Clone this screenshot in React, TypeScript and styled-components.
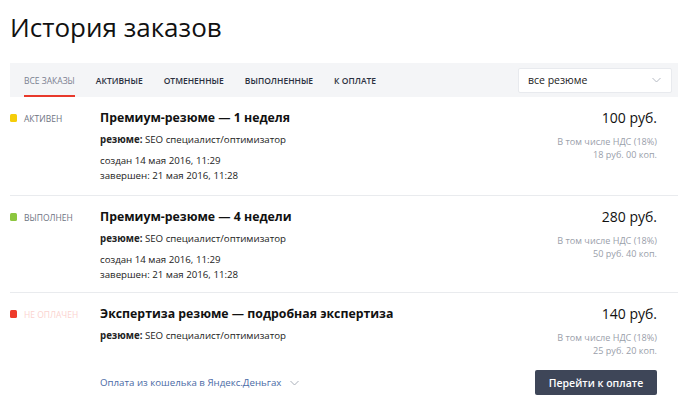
import React from "react";
import styled, { createGlobalStyle } from "styled-components";

const Global = createGlobalStyle`
  html, body { margin: 0; padding: 0; background: #fff; }
  body { font-family: "Open Sans", "Noto Sans", sans-serif; color: #1a1a1a; }
`;

const Page = styled.div`
  padding: 0 11px 0 10px;
`;

const Title = styled.h1`
  margin: 0;
  padding-top: 9px;
  height: 63px;
  box-sizing: border-box;
  font-size: 26px;
  line-height: 36px;
  font-weight: 400;
  color: #111;
`;

const TabBar = styled.div`
  display: flex;
  align-items: center;
  height: 34px;
  background: #f4f5f7;
  padding: 0 6px 0 14px;
`;

const Tabs = styled.div`
  display: flex;
  gap: 21px;
  height: 100%;
  flex: 1;
`;

const Tab = styled.div<{ $active?: boolean }>`
  position: relative;
  display: flex;
  align-items: center;
  font-size: 8.5px;
  font-weight: ${(p) => (p.$active ? 400 : 600)};
  color: ${(p) => (p.$active ? "#7a8090" : "#2b3040")};
  text-transform: uppercase;
  &::after {
    content: "";
    display: ${(p) => (p.$active ? "block" : "none")};
    position: absolute;
    left: 0;
    right: 0;
    bottom: 0;
    height: 2px;
    background: #e8392b;
  }
`;

const Select = styled.div`
  display: flex;
  align-items: center;
  justify-content: space-between;
  width: 154px;
  height: 25px;
  box-sizing: border-box;
  background: #fff;
  border: 1px solid #e8eaee;
  border-radius: 2px;
  padding: 0 10px 0 9px;
  font-size: 10.5px;
  color: #222;
`;

const Row = styled.div<{ $last?: boolean; $height: number }>`
  display: grid;
  grid-template-columns: 90px 1fr auto;
  padding: 13px 21px 0 0;
  height: ${(p) => (p.$last ? "auto" : `${p.$height}px`)};
  box-sizing: border-box;
  border-bottom: ${(p) => (p.$last ? "none" : "1px solid #e9ebee")};
`;

const Status = styled.div<{ $color: string; $text: string }>`
  display: flex;
  align-items: center;
  gap: 7px;
  height: 16px;
  font-size: 8.5px;
  text-transform: uppercase;
  color: ${(p) => p.$text};
  &::before {
    content: "";
    width: 7px;
    height: 8px;
    border-radius: 1.5px;
    background: ${(p) => p.$color};
  }
`;

const Main = styled.div`
  display: flex;
  flex-direction: column;
`;

const OrderTitle = styled.div`
  font-size: 12.3px;
  font-weight: 700;
  line-height: 16px;
  color: #111;
`;

const Resume = styled.div`
  margin-top: 7px;
  font-size: 9.7px;
  line-height: 14px;
  color: #222;
  b { font-weight: 700; }
`;

const Dates = styled.div`
  margin-top: 6px;
  font-size: 9.7px;
  line-height: 15px;
  color: #222;
`;

const PayLink = styled.div`
  margin-top: 33px;
  display: flex;
  align-items: center;
  gap: 9px;
  font-size: 9.7px;
  line-height: 14px;
  color: #4a6aa5;
`;

const Side = styled.div`
  display: flex;
  flex-direction: column;
  align-items: flex-end;
`;

const Price = styled.div`
  font-size: 14px;
  line-height: 16px;
  color: #111;
`;

const Vat = styled.div`
  margin-top: 9px;
  font-size: 9.1px;
  line-height: 13px;
  color: #9aa0aa;
  text-align: right;
`;

const PayButton = styled.button`
  margin-top: 13px;
  width: 122px;
  height: 25px;
  border: none;
  border-radius: 2px;
  background: #3e4658;
  color: #fff;
  font-family: inherit;
  font-size: 10.5px;
  font-weight: 600;
  cursor: pointer;
`;

const Chevron = ({ color = "#aab0ba" }: { color?: string }) => (
  <svg width="9" height="6" viewBox="0 0 9 6" fill="none">
    <path d="M0.5 1l4 4 4-4" stroke={color} strokeWidth="1" />
  </svg>
);

type Order = {
  status: string;
  dot: string;
  text: string;
  title: string;
  price: string;
  vat: string;
  height: number;
  created?: string;
  done?: string;
  unpaid?: boolean;
};

const orders: Order[] = [
  {
    status: "Активен",
    dot: "#f5cd0a",
    text: "#6d7382",
    title: "Премиум-резюме — 1 неделя",
    price: "100 руб.",
    vat: "18 руб. 00 коп.",
    height: 99,
    created: "создан 14 мая 2016, 11:29",
    done: "завершен: 21 мая 2016, 11:28",
  },
  {
    status: "Выполнен",
    dot: "#8cc63f",
    text: "#6d7382",
    title: "Премиум-резюме — 4 недели",
    price: "280 руб.",
    vat: "50 руб. 40 коп.",
    height: 97,
    created: "создан 14 мая 2016, 11:29",
    done: "завершен: 21 мая 2016, 11:28",
  },
  {
    status: "Не оплачен",
    dot: "#ee3b2b",
    text: "#fbd3cf",
    title: "Экспертиза резюме — подробная экспертиза",
    price: "140 руб.",
    vat: "25 руб. 20 коп.",
    height: 0,
    unpaid: true,
  },
];

export default function App() {
  return (
    <Page>
      <Global />
      <Title>История заказов</Title>
      <TabBar>
        <Tabs>
          <Tab $active>Все заказы</Tab>
          <Tab>Активные</Tab>
          <Tab>Отмененные</Tab>
          <Tab>Выполненные</Tab>
          <Tab>К оплате</Tab>
        </Tabs>
        <Select>
          все резюме
          <Chevron color="#b5bac3" />
        </Select>
      </TabBar>
      {orders.map((o, i) => (
        <Row key={i} $last={i === orders.length - 1} $height={o.height}>
          <Status $color={o.dot} $text={o.text}>
            {o.status}
          </Status>
          <Main>
            <OrderTitle>{o.title}</OrderTitle>
            <Resume>
              <b>резюме:</b> SEO специалист/оптимизатор
            </Resume>
            {o.created && (
              <Dates>
                {o.created}
                <br />
                {o.done}
              </Dates>
            )}
            {o.unpaid && (
              <PayLink>
                Оплата из кошелька в Яндекс.Деньгах
                <Chevron />
              </PayLink>
            )}
          </Main>
          <Side>
            <Price>{o.price}</Price>
            <Vat>
              В том числе НДС (18%)
              <br />
              {o.vat}
            </Vat>
            {o.unpaid && <PayButton>Перейти к оплате</PayButton>}
          </Side>
        </Row>
      ))}
    </Page>
  );
}
